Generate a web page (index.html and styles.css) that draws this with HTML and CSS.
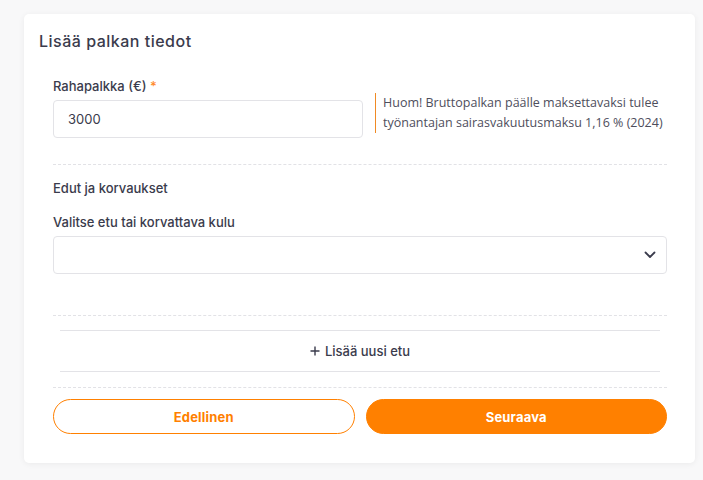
FILE: index.html
```html
<!DOCTYPE html>
<html lang="fi">
<head>
<meta charset="utf-8">
<title>Lisää palkan tiedot</title>
<link rel="stylesheet" href="styles.css">
</head>
<body>
<div class="card">
  <h2 class="title">Lisää palkan tiedot</h2>
  <div class="section">
    <div class="salary-row">
      <div class="field">
        <label class="label">Rahapalkka (€) <span class="req">*</span></label>
        <div class="input">3000</div>
      </div>
      <div class="info">Huom! Bruttopalkan päälle maksettavaksi tulee työnantajan sairasvakuutusmaksu 1,16 % (2024)</div>
    </div>
    <div class="divider"></div>
    <div class="subhead">Edut ja korvaukset</div>
    <label class="label label-select">Valitse etu tai korvattava kulu</label>
    <div class="input select">
      <svg class="chevron" width="12" height="8" viewBox="0 0 12 8"><path d="M1.5 1.5 L6 6 L10.5 1.5" fill="none" stroke="#3a3b4c" stroke-width="1.8" stroke-linecap="round" stroke-linejoin="round"/></svg>
    </div>
    <div class="divider divider-2"></div>
    <div class="add-wrap">
      <div class="add">
        <svg class="plus" width="10" height="10" viewBox="0 0 10 10"><path d="M5 0.5 V9.5 M0.5 5 H9.5" stroke="#3a3b4c" stroke-width="1.4"/></svg>
        <span>Lisää uusi etu</span>
      </div>
    </div>
    <div class="divider divider-3"></div>
    <div class="buttons">
      <button class="btn btn-outline">Edellinen</button>
      <button class="btn btn-primary">Seuraava</button>
    </div>
  </div>
</div>
</body>
</html>
```

FILE: styles.css
```css
* { box-sizing: border-box; }
html, body { margin: 0; padding: 0; }
body {
  background: #f8f8f9;
  font-family: Inter, "Noto Sans", "Liberation Sans", sans-serif;
  color: #3a3b4c;
  width: 703px;
  height: 480px;
  overflow: hidden;
  padding-top: 14px;
}
.card {
  margin-left: 24px;
  width: 671px;
  height: 449px;
  background: #fff;
  border-radius: 5px;
  box-shadow: 0 1px 6px rgba(0,0,0,0.06);
  padding: 17px 28px 0 15px;
}
.title {
  margin: 0;
  font-size: 16px;
  line-height: 20px;
  font-weight: 500;
  letter-spacing: 0.5px;
  color: #3a3b4c;
}
.section {
  padding-left: 14px;
  margin-top: 26px;
}
.salary-row {
  display: flex;
  align-items: flex-start;
}
.field { flex: 0 0 310px; }
.label {
  display: block;
  font-size: 13px;
  line-height: 18px;
  font-weight: 500;
  color: #3a3b4c;
}
.req { color: #ff8a2a; }
.input {
  margin-top: 5px;
  height: 38px;
  border: 1px solid #e3e3e7;
  border-radius: 4px;
  padding: 0 14px;
  display: flex;
  align-items: center;
  font-size: 13px;
  color: #3a3b4c;
}
.info {
  flex: 1;
  margin-left: 12px;
  margin-top: 16px;
  border-left: 1px solid #f08a24;
  padding-left: 7px;
  font-family: "Open Sans", "Noto Sans", sans-serif;
  font-size: 12.5px;
  line-height: 20px;
  color: #4e4e5c;
}
.divider {
  border-top: 1px dashed #e2e2e6;
  margin-top: 26px;
}
.subhead {
  margin-top: 14px;
  font-size: 13px;
  line-height: 18px;
  font-weight: 500;
}
.label-select { margin-top: 16px; }
.select {
  justify-content: flex-end;
  padding-right: 10px;
}
.divider-2 { margin-top: 41px; }
.add-wrap { padding: 14px 7px 0; }
.add {
  height: 42px;
  border-top: 1px solid #e3e3e7;
  border-bottom: 1px solid #e3e3e7;
  display: flex;
  align-items: center;
  justify-content: center;
  gap: 5px;
  font-size: 13px;
  font-weight: 500;
}
.divider-3 { margin-top: 15px; }
.buttons {
  margin-top: 11px;
  display: flex;
  gap: 11px;
}
.btn {
  flex: 1;
  height: 35px;
  border-radius: 18px;
  font-family: Inter, "Noto Sans", sans-serif;
  font-size: 13px;
  font-weight: 700;
  letter-spacing: 0.2px;
  cursor: pointer;
}
.btn-outline {
  background: #fff;
  border: 1px solid #ff8000;
  color: #ff8000;
}
.btn-primary {
  background: #ff8000;
  border: 1px solid #ff8000;
  color: #fff;
}
```
